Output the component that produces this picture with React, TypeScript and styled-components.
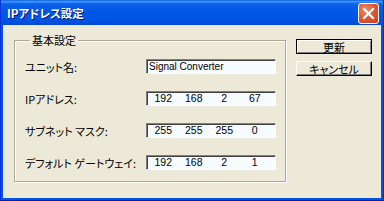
import React from "react";
import styled, { createGlobalStyle } from "styled-components";

const GlobalStyle = createGlobalStyle`
  html, body {
    margin: 0;
    padding: 0;
    background: #ece9d8;
  }
`;

const uiFont = `"Noto Sans CJK JP", "Liberation Sans", sans-serif`;
const fieldFont = `"Liberation Sans", Arial, sans-serif`;

interface FieldRow {
  readonly label: string;
  readonly text?: string;
  readonly octets?: readonly string[];
}

const rows: FieldRow[] = [
  { label: "ユニット名:", text: "Signal Converter" },
  { label: "IPアドレス:", octets: ["192", "168", "2", "67"] },
  { label: "サブネット マスク:", octets: ["255", "255", "255", "0"] },
  { label: "デフォルト ゲートウェイ:", octets: ["192", "168", "2", "1"] }
];

export default function App() {
  return (
    <>
      <GlobalStyle />
      <Window>
        <TitleBar>
          <Title>IPアドレス設定</Title>
          <CloseButton aria-label="close">
            <svg width="13" height="13" viewBox="0 0 13 13">
              <path
                d="M2 2 L11 11 M11 2 L2 11"
                stroke="#fff"
                strokeWidth="2.2"
                strokeLinecap="square"
              />
            </svg>
          </CloseButton>
        </TitleBar>
        <Body>
          <GroupBox>
            <Legend>基本設定</Legend>
            {rows.map((row) => (
              <Row key={row.label}>
                <Label>{row.label}</Label>
                {row.octets ? (
                  <IpBox>
                    {row.octets.map((o, i) => (
                      <Octet key={i}>{o}</Octet>
                    ))}
                  </IpBox>
                ) : (
                  <TextBox>{row.text}</TextBox>
                )}
              </Row>
            ))}
          </GroupBox>
          <Buttons>
            <Button $default>更新</Button>
            <Button>キャンセル</Button>
          </Buttons>
        </Body>
      </Window>
    </>
  );
}

const Window = styled.div`
  width: 384px;
  height: 201px;
  box-sizing: border-box;
  display: flex;
  flex-direction: column;
  background: #0054e3;
  border-left: 1px solid #0831d9;
  border-right: 1px solid #001ea0;
  border-bottom: 1px solid #001ea0;
  padding: 0 2px 2px 2px;
  font-family: ${uiFont};
`;

const TitleBar = styled.div`
  height: 25px;
  margin: 0 -2px;
  padding: 0 3px 0 6px;
  display: flex;
  align-items: center;
  justify-content: space-between;
  background: linear-gradient(
    to bottom,
    #0a5fd8 0%,
    #3d95ff 6%,
    #0a61e6 16%,
    #0058e6 45%,
    #0054e3 80%,
    #0049d6 100%
  );
`;

const Title = styled.span`
  color: #fff;
  font-size: 11.5px;
  font-weight: bold;
  font-feature-settings: "palt";
  text-shadow: 1px 1px 0 #0a1883;
`;

const CloseButton = styled.div`
  width: 21px;
  height: 21px;
  box-sizing: border-box;
  margin-top: 1px;
  margin-right: 1px;
  border: 1px solid #fff;
  border-radius: 3px;
  display: flex;
  align-items: center;
  justify-content: center;
  background: radial-gradient(
    circle at 35% 30%,
    #f08a6a 0%,
    #e15b34 45%,
    #c4411c 100%
  );
`;

const Body = styled.div`
  flex: 1;
  display: flex;
  align-items: flex-start;
  background: #ece9d8;
  padding: 9px 0 0 11px;
`;

const GroupBox = styled.fieldset`
  width: 272px;
  height: 148px;
  box-sizing: border-box;
  margin: 0;
  padding: 13px 0 0 10px;
  border: 1px solid #aca899;
  box-shadow: 1px 1px 0 #fff, inset 1px 1px 0 #fff;
  display: flex;
  flex-direction: column;
  gap: 17px;
`;

const Legend = styled.legend`
  margin-left: 5px;
  padding: 0 2px;
  font-size: 11px;
  line-height: 12px;
  color: #000;
  font-feature-settings: "palt";
`;

const Row = styled.div`
  height: 15px;
  display: flex;
  align-items: center;
`;

const Label = styled.span`
  width: 121px;
  font-size: 11px;
  color: #000;
  font-feature-settings: "palt";
  white-space: nowrap;
`;

const Field = styled.div`
  width: 130px;
  height: 15px;
  box-sizing: border-box;
  background: #f6fbff;
  border-top: 1px solid #808080;
  border-left: 1px solid #808080;
  border-right: 1px solid #fff;
  border-bottom: 1px solid #fff;
  box-shadow: inset 1px 1px 0 #404040;
  font-family: ${fieldFont};
  font-size: 10.5px;
  line-height: 13px;
  color: #000;
`;

const TextBox = styled(Field)`
  padding-left: 2px;
  font-size: 10px;
`;

const IpBox = styled(Field)`
  display: grid;
  grid-template-columns: repeat(4, 30.5px);
  padding-left: 1px;
`;

const Octet = styled.span`
  text-align: center;
`;

const Buttons = styled.div`
  margin-left: 10px;
  padding-top: 5px;
  display: flex;
  flex-direction: column;
  gap: 7px;
`;

const Button = styled.div<{ $default?: boolean }>`
  width: 76px;
  height: 15px;
  box-sizing: border-box;
  display: flex;
  align-items: center;
  justify-content: center;
  font-size: 11px;
  color: #000;
  font-feature-settings: "palt";
  background: #ece9d8;
  border: 1px solid ${(p) => (p.$default ? "#000" : "#fff")};
  border-right-color: #000;
  border-bottom-color: #000;
  box-shadow: ${(p) =>
    p.$default
      ? "inset 1px 1px 0 #fff, inset -1px -1px 0 #808080"
      : "inset -1px -1px 0 #808080"};
`;
